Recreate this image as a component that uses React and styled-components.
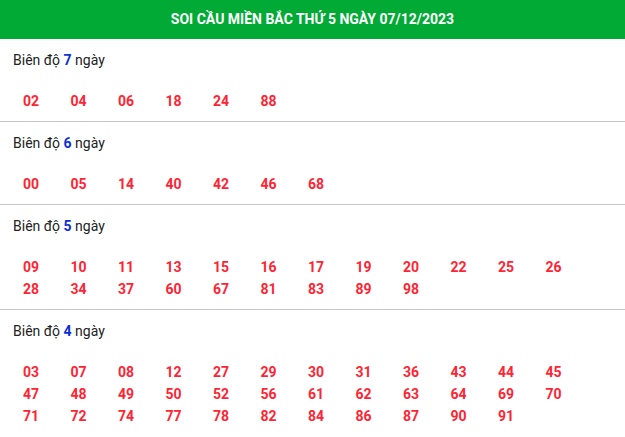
import React from "react"
import styled, { createGlobalStyle } from 'styled-components';

const Global = createGlobalStyle`
body {
  margin: 0;
  background: #fff;
  font-family: Roboto, "Liberation Sans", Arial, sans-serif;
}
`

const Khung = styled.div`
width: 625px;
`

const TieuDe = styled.h1`
margin: 0;
height: 39px;
line-height: 39px;
background: #00aa34;
color: #fff;
font-size: 14px;
font-weight: 700;
text-align: center;
`

const Muc = styled.section`
padding: 11px 0 9px;
border-bottom: ${p => p.last ? 'none' : '1px solid #c6c6c6'};
`

const Nhan = styled.div`
padding-left: 13px;
font-size: 14px;
line-height: 20px;
color: #222;

b {
  color: #0b2fd6;
}
`

const LuoiSo = styled.div`
margin-top: 20px;
padding-left: 23px;
display: grid;
grid-template-columns: repeat(12, 47.5px);
`

const So = styled.span`
font-size: 14px;
line-height: 22px;
font-weight: 700;
color: #ff2433;
`

const data = [
  { ngay: 7, so: ["02", "04", "06", "18", "24", "88"] },
  { ngay: 6, so: ["00", "05", "14", "40", "42", "46", "68"] },
  { ngay: 5, so: ["09", "10", "11", "13", "15", "16", "17", "19", "20", "22", "25", "26", "28", "34", "37", "60", "67", "81", "83", "89", "98"] },
  { ngay: 4, so: ["03", "07", "08", "12", "27", "29", "30", "31", "36", "43", "44", "45", "47", "48", "49", "50", "52", "56", "61", "62", "63", "64", "69", "70", "71", "72", "74", "77", "78", "82", "84", "86", "87", "90", "91"] },
]

const App = () => {
  return (
    <Khung>
      <Global />
      <TieuDe>SOI CẦU MIỀN BẮC THỨ 5 NGÀY 07/12/2023</TieuDe>
      {data.map((m, i) => (
        <Muc key={m.ngay} last={i === data.length - 1}>
          <Nhan>Biên độ <b>{m.ngay}</b> ngày</Nhan>
          <LuoiSo>
            {m.so.map(s => <So key={s}>{s}</So>)}
          </LuoiSo>
        </Muc>
      ))}
    </Khung>
  )
}

export default App
